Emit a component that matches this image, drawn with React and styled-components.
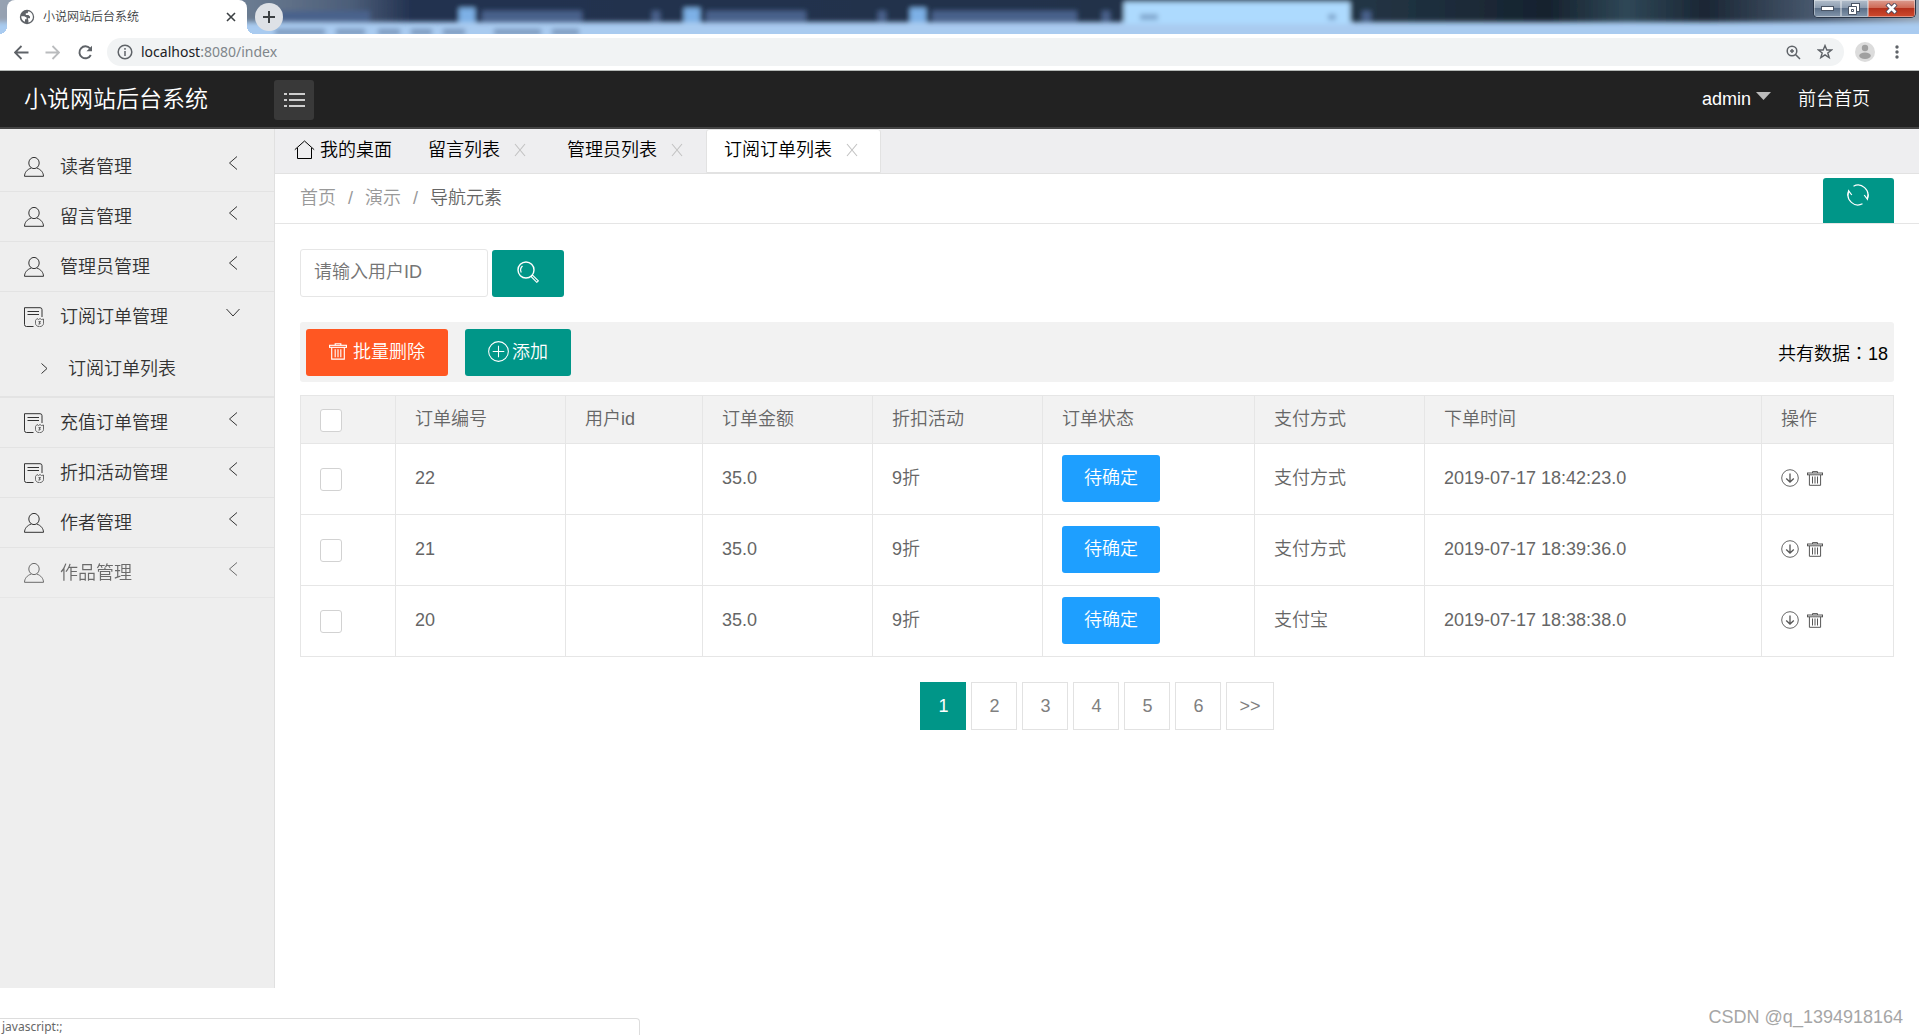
import React, { useState } from 'react';
import styled, { createGlobalStyle, css } from 'styled-components';

const GlobalStyle = createGlobalStyle`
  * {
    box-sizing: border-box;
  }

  body {
    margin: 0;
    background: #fff;
    color: #000;
    font: 350 18px/24px "Liberation Sans", "Noto Sans CJK SC", sans-serif;
  }

  button, input {
    font: inherit;
  }

  button {
    border: 0;
    padding: 0;
    background: none;
    color: inherit;
    cursor: pointer;
  }

  a {
    color: inherit;
    text-decoration: none;
  }

  ul, ol {
    list-style: none;
    margin: 0;
    padding: 0;
  }

  svg {
    display: block;
    flex: none;
  }
`;

const Page = styled.div`
  display: flex;
  flex-direction: column;
  min-height: 100vh;
`;

/* browser window */

const TitleBar = styled.div`
  position: relative;
  display: flex;
  align-items: flex-end;
  height: 34px;
  padding-left: 7px;
  overflow: hidden;
  background: #a9cbf0;
`;

const Glass = styled.svg`
  position: absolute;
  top: 0;
  left: 0;
  width: 100%;
  height: 100%;
`;

const BrowserTab = styled.div`
  position: relative;
  display: flex;
  align-items: center;
  width: 240px;
  height: 34px;
  padding: 0 9px 0 12px;
  border-radius: 8px 8px 0 0;
  background: #fff;
  color: #3c4043;
  font-size: 12px;

  &::before,
  &::after {
    content: '';
    position: absolute;
    bottom: 0;
    left: -8px;
    width: 8px;
    height: 8px;
    background: radial-gradient(circle at 0 0, transparent 8px, #fff 8px);
  }

  &::after {
    left: 100%;
    background: radial-gradient(circle at 100% 0, transparent 8px, #fff 8px);
  }

  span {
    flex: 1;
    margin-left: 8px;
  }
`;

const NewTab = styled.button`
  position: relative;
  display: flex;
  align-items: center;
  justify-content: center;
  width: 28px;
  height: 28px;
  margin: 0 auto 3px 8px;
  border-radius: 50%;
  background: #dee1e6;
  color: #3c4043;
`;

const WindowButtons = styled.div`
  position: relative;
  display: flex;
  align-self: flex-start;
  height: 18px;
  margin-right: 3px;
  border: 1px solid #2a3648;
  border-top: 0;
  border-radius: 0 0 5px 5px;
  overflow: hidden;
`;

const WindowButton = styled.button`
  display: flex;
  align-items: center;
  justify-content: center;
  width: ${({ $close }) => ($close ? 47 : 27)}px;
  box-shadow: inset 0 0 0 1px rgba(255, 255, 255, 0.4);
  background: ${({ $close }) => ($close
    ? 'linear-gradient(#dc9d8f 0, #cf6b56 45%, #b5321c 50%, #cf4a2e 100%)'
    : 'linear-gradient(#b3bfcc 0, #8c9cb0 45%, #5c7089 50%, #8497ac 100%)')};
`;

const AddressBar = styled.div`
  display: flex;
  align-items: center;
  height: 37px;
  padding-left: 12px;
  border-bottom: 1px solid #b4b8b6;
  color: #5f6368;
`;

const ChromeButton = styled.button`
  display: flex;
  align-items: center;
  justify-content: center;
  width: ${({ $width }) => $width || 32}px;
  height: 28px;
`;

const Omnibox = styled.div`
  display: flex;
  flex: 1;
  align-items: center;
  height: 28px;
  margin: 0 11px;
  padding: 0 3px 0 10px;
  border-radius: 14px;
  background: #f1f3f4;
`;

const UrlText = styled.span`
  flex: 1;
  margin-left: 8px;
  color: #80868b;
  font: 400 14px/20px "Noto Sans", sans-serif;

  b {
    color: #202124;
    font-weight: 400;
  }
`;

/* site header */

const Header = styled.header`
  display: flex;
  align-items: center;
  height: 58px;
  padding: 0 49px 0 24px;
  border-bottom: 2px solid #444;
  background: #222;
  color: #fff;
`;

const Logo = styled.a`
  width: 250px;
  font-size: 23px;
  line-height: 54px;
`;

const MenuButton = styled.button`
  display: flex;
  align-items: center;
  justify-content: center;
  width: 40px;
  height: 40px;
  margin: 2px auto 0 0;
  border-radius: 3px;
  background: #393939;
`;

const UserMenu = styled.button`
  display: flex;
  align-items: center;
  gap: 5px;
  margin-right: 27px;

  svg {
    margin-bottom: 6px;
  }
`;

/* sidebar */

const Body = styled.div`
  display: flex;
  flex: 1;
`;

const Sidebar = styled.nav`
  flex: none;
  width: 275px;
  padding-top: 13px;
  border-right: 1px solid #e0e0e0;
  background: #eee;
  color: #333;
`;

const NavItem = styled.li`
  border-bottom: ${({ $open }) => ($open ? 2 : 1)}px solid #e3e3e3;
  opacity: ${({ $faded }) => ($faded ? 0.7 : 1)};
`;

const NavLink = styled.a`
  display: flex;
  align-items: center;
  height: 49px;
  padding: 0 34px 0 24px;

  span {
    flex: 1;
    margin-left: 16px;
  }

  svg:last-child {
    margin-bottom: 8px;
  }
`;

const SubLink = styled.a`
  display: flex;
  align-items: center;
  gap: 19px;
  height: 55px;
  padding-left: 40px;
`;

/* content */

const Main = styled.main`
  flex: 1;
  min-width: 0;
`;

const Tabs = styled.div`
  display: flex;
  align-items: flex-start;
  height: 45px;
  padding-left: 1px;
  border-bottom: 1px solid #e2e2e2;
  background: #eeeef0;
`;

const Tab = styled.div`
  display: flex;
  align-items: center;
  height: 44px;
  padding: 0 18px 3px;

  ${({ $active }) => $active && css`
    padding: 0 17px 2px;
    border: 1px solid #e2e2e2;
    border-radius: 3px 3px 0 0;
    background: #fff;
  `}

  svg {
    margin-right: 5px;
  }
`;

const CloseButton = styled.button`
  display: flex;
  justify-content: center;
  width: 22px;
  margin-left: 9px;

  svg {
    margin: 0;
  }
`;

const Crumbs = styled.div`
  display: flex;
  align-items: flex-start;
  justify-content: space-between;
  height: 50px;
  padding: 0 25px;
  border-bottom: 1px solid #e5e5e5;

  ol {
    display: flex;
    color: #999;
    line-height: 48px;
  }

  li + li::before {
    content: '/';
    margin: 0 12px;
  }

  li:last-child a {
    color: #666;
  }
`;

const Button = styled.button`
  display: flex;
  align-items: center;
  justify-content: center;
  gap: ${({ $gap }) => $gap || 0}px;
  height: 47px;
  padding: 0 ${({ $pad }) => $pad || 22}px 1px;
  border-radius: 3px;
  background: ${({ $color }) => $color || '#009688'};
  color: #fff;
`;

const RefreshButton = styled(Button)`
  align-items: flex-start;
  width: 71px;
  height: 45px;
  margin-top: 4px;
  padding: 6px 2px 0 0;
  border-radius: 3px 3px 0 0;
`;

const Content = styled.div`
  padding: 25px;
`;

const SearchForm = styled.form`
  display: flex;
  align-items: flex-end;
  gap: 4px;
`;

const SearchInput = styled.input`
  width: 188px;
  height: 48px;
  padding: 0 13px 2px;
  border: 1px solid #e6e6e6;
  border-radius: 3px;
  background: #fff;

  &::placeholder {
    color: #757575;
    opacity: 1;
  }
`;

const SearchButton = styled(Button)`
  padding: 0 25px 3px;
`;

const Toolbar = styled.div`
  display: flex;
  align-items: center;
  gap: 17px;
  height: 60px;
  margin: 25px 0 13px;
  padding: 0 6px;
  border-radius: 3px;
  background: #f2f2f2;
`;

const Total = styled.span`
  margin: 3px 0 0 auto;
  font-family: "Liberation Sans", "Noto Sans CJK TC", sans-serif;
`;

const Table = styled.table`
  width: 100%;
  table-layout: fixed;
  border-collapse: collapse;
  color: #666;
  text-align: left;

  th,
  td {
    height: 71px;
    padding: 0 19px 2px;
    border: 1px solid #e6e6e6;
    font-weight: inherit;
  }

  th {
    height: 48px;
    background: #f2f2f2;
  }
`;

const Col = styled.col`
  width: ${({ $width }) => $width}px;
`;

const Checkbox = styled.input.attrs({ type: 'checkbox' })`
  display: block;
  appearance: none;
  width: 22px;
  height: 23px;
  margin: 3px 0 0;
  border: 1px solid #d2d2d2;
  border-radius: 3px;
  background: #fff;

  &:checked {
    background: #009688;
  }
`;

const Actions = styled.div`
  display: flex;
  align-items: center;
  gap: 8px;
  color: #555;
`;

const Pagination = styled.nav`
  display: flex;
  justify-content: center;
  gap: 5px;
  margin-top: 25px;
`;

const PageLink = styled.a`
  min-width: 46px;
  height: 48px;
  padding: 0 12px;
  border: 1px solid ${({ $active }) => ($active ? '#009688' : '#e2e2e2')};
  background: ${({ $active }) => ($active ? '#009688' : '#fff')};
  color: ${({ $active }) => ($active ? '#fff' : '#808080')};
  line-height: 46px;
  text-align: center;
`;

const Footer = styled.footer`
  display: flex;
  align-items: flex-end;
  justify-content: space-between;
  height: 47px;
  overflow: hidden;
`;

const StatusBubble = styled.div`
  width: calc(100% / 3);
  height: 17px;
  padding: 0 2px;
  border: 1px solid #ddd;
  border-width: 1px 1px 0 0;
  border-radius: 0 4px 0 0;
  color: #666;
  font: 400 12px/16px "Noto Sans", sans-serif;
`;

const Watermark = styled.span`
  padding: 0 16px 6px 0;
  color: #a6a6a6;
  font-weight: 400;
`;

/* icons */

const Icon = ({ size = 20, width = size, height = size, line = 1, box = '0 0 20 20', children }) => (
  <svg width={width} height={height} viewBox={box} fill="none" stroke="currentColor" strokeWidth={line} aria-hidden="true">
    {children}
  </svg>
);

const UserIcon = () => (
  <Icon>
    <ellipse cx="10" cy="6" rx="5.2" ry="5.6" />
    <path d="M7.2 11C3 12.5 0.6 15.5 0.5 19.3H19.5C19.4 15.5 17 12.5 12.8 11" />
  </Icon>
);

const OrderIcon = () => (
  <Icon>
    <path d="M9.5 19.5H2.5A2 2 0 0 1 0.5 17.5V0.7H16A2 2 0 0 1 18 2.7V10" />
    <path d="M3.5 4.5H15M3.5 7.5H15" />
    <path d="M11.5 13.5L13 11.5L14.5 12.5L16 11.5L17.5 12.5L19.5 12V16.5C19.5 18 18 19.5 15.5 19.8C13 19.5 11.5 18 11.5 16.5Z" opacity="0.7" />
    <path d="M14.5 14.5H16.5L14.8 16.2H16.5L14.5 17.8" opacity="0.7" />
  </Icon>
);

const ArrowLeft = () => <Icon size={14} box="0 0 14 14"><path d="M11 0.5L3.5 7L11 13.5" /></Icon>;
const ArrowDown = () => <Icon width={14} height={9} box="0 0 14 9"><path d="M0.5 1L7 8L13.5 1" /></Icon>;
const ArrowRight = () => <Icon width={9} height={11} box="0 0 9 11"><path d="M1.5 0.5L7 5.5L1.5 10.5" /></Icon>;
const Cross = () => <svg width="14" height="14" viewBox="0 0 14 14" stroke="#c2c2c2" strokeWidth="1.1" aria-hidden="true"><path d="M2 1L12 13M12 1L2 13" /></svg>;

const HomeIcon = () => (
  <Icon width={21}>
    <path d="M0.3 9.7L10 1L19.7 9.7M3 8V18.5H17V8" />
  </Icon>
);

const TrashIcon = ({ width = 16, height = 15 }) => (
  <Icon width={width} height={height} box="0 0 16 15">
    <path d="M5.5 2V0.6H10.5V2" />
    <rect x="0.5" y="2" width="15" height="1.8" />
    <path d="M2.4 4V14.3H13.6V4M5.5 5.5V12.5M8 5.5V12.5M10.5 5.5V12.5" />
  </Icon>
);

const AddIcon = () => (
  <Icon width={21} height={21}>
    <circle cx="10" cy="10" r="9.4" />
    <path d="M10 4.5V15.5M4.5 10H15.5" />
  </Icon>
);

const DownIcon = () => (
  <Icon size={18} box="0 0 18 18">
    <circle cx="9" cy="9" r="8.3" strokeWidth="0.9" />
    <path d="M9 4.5V13M5.2 9.5L9 13L12.8 9.5" strokeWidth="1.3" />
  </Icon>
);

const SearchIcon = () => (
  <Icon size={22} box="0 0 22 22" line={1.4}>
    <circle cx="9" cy="9" r="8" />
    <path d="M4.3 11.5A5.4 5.4 0 0 1 5.5 5" strokeWidth="1.2" />
    <path d="M14 15.5L15.5 14L21.3 19.8L19.8 21.3Z" strokeWidth="1.1" />
  </Icon>
);

const RefreshIcon = () => (
  <Icon size={22} box="0 0 22 22" line={1.2}>
    <path d="M6.5 2.2A10 10 0 0 1 20.4 14.5M1.6 7.5A10 10 0 0 0 15.5 19.8" />
    <path d="M17.2 11L20.4 15.2L21.3 10.4M0.7 11.6L1.6 6.8L4.8 11" />
  </Icon>
);

const MenuIcon = () => (
  <Icon width={21} height={14} box="0 0 21 14" line={1.4}>
    <path d="M0 1H3M0 7H3M0 13H3M5 1H21M5 7H21M5 13H21" />
  </Icon>
);

const GlassBackdrop = () => (
  <Glass viewBox="0 0 1919 34" preserveAspectRatio="none" aria-hidden="true">
    <defs>
      <linearGradient id="dark" x1="0" x2="1" y1="0" y2="0">
        <stop offset="0" stopColor="#9aa5b4" />
        <stop offset="0.13" stopColor="#6f7f94" />
        <stop offset="0.19" stopColor="#4b5d78" />
        <stop offset="0.22" stopColor="#233250" />
        <stop offset="0.58" stopColor="#22304a" />
        <stop offset="0.71" stopColor="#223444" />
        <stop offset="0.8" stopColor="#16222e" />
        <stop offset="0.84" stopColor="#2f4757" />
        <stop offset="0.88" stopColor="#1a2634" />
        <stop offset="0.94" stopColor="#4b5c72" />
        <stop offset="1" stopColor="#a9b7c6" />
      </linearGradient>
      <filter id="soft" x="-5%" y="-50%" width="110%" height="200%">
        <feGaussianBlur stdDeviation="2.5" />
      </filter>
    </defs>
    <g filter="url(#soft)">
      <rect x="-20" y="-10" width="1960" height="32" fill="url(#dark)" />
      <rect x="1124" y="2" width="226" height="22" fill="#addafe" />
      <g fill="#7db0e6">
        <rect x="459" y="8" width="16" height="14" />
        <rect x="684" y="8" width="16" height="14" />
        <rect x="910" y="8" width="16" height="14" />
      </g>
      <g fill="#4a628c">
        <rect x="275" y="11" width="95" height="10" />
        <rect x="482" y="11" width="100" height="10" />
        <rect x="706" y="11" width="100" height="10" />
        <rect x="932" y="11" width="145" height="10" />
        <rect x="878" y="11" width="8" height="10" />
        <rect x="1102" y="11" width="8" height="10" />
        <rect x="652" y="11" width="8" height="10" />
        <rect x="1362" y="11" width="9" height="10" />
      </g>
      <g fill="#7fa5cc">
        <rect x="1140" y="14" width="18" height="6" />
        <rect x="1328" y="14" width="8" height="6" />
      </g>
      <path d="M275 32H325M336 32H365M378 32H400M411 32H432M443 32H465M494 32H541M552 32H579" stroke="#7c99bd" strokeWidth="6" />
    </g>
  </Glass>
);

const menu = [
  { title: '读者管理', icon: UserIcon },
  { title: '留言管理', icon: UserIcon },
  { title: '管理员管理', icon: UserIcon },
  { title: '订阅订单管理', icon: OrderIcon, sub: '订阅订单列表' },
  { title: '充值订单管理', icon: OrderIcon },
  { title: '折扣活动管理', icon: OrderIcon },
  { title: '作者管理', icon: UserIcon },
  { title: '作品管理', icon: UserIcon, faded: true },
];

const tabs = ['留言列表', '管理员列表', '订阅订单列表'];

const columns = [
  ['订单编号', 170],
  ['用户id', 137],
  ['订单金额', 170],
  ['折扣活动', 170],
  ['订单状态', 212],
  ['支付方式', 170],
  ['下单时间', 337],
  ['操作', 132],
];

const orders = [
  { id: 22, price: '35.0', discount: '9折', status: '待确定', pay: '支付方式', time: '2019-07-17 18:42:23.0' },
  { id: 21, price: '35.0', discount: '9折', status: '待确定', pay: '支付方式', time: '2019-07-17 18:39:36.0' },
  { id: 20, price: '35.0', discount: '9折', status: '待确定', pay: '支付宝', time: '2019-07-17 18:38:38.0' },
];

const Browser = () => (
  <>
    <TitleBar>
      <GlassBackdrop />
      <BrowserTab>
        <svg width="16" height="16" viewBox="0 0 16 16" aria-hidden="true">
          <circle cx="8" cy="8" r="7.2" fill="#5f6368" />
          <path d="M2.2 7.2H5.2L7.6 8.6V10.2H6V12.8C3.8 12 2.2 10 2.2 7.2ZM9.4 2.2L8.6 4.2H6.8V6H9.4L11 7.6V9.2H8.8L9.4 11.4V13.4C12.4 12.8 13.9 10.4 13.9 8C13.9 5 12 2.8 9.4 2.2Z" fill="#fff" />
        </svg>
        <span>小说网站后台系统</span>
        <ChromeButton aria-label="关闭" $width={14}>
          <Icon size={10} box="0 0 10 10" line={1.6}><path d="M1 1L9 9M9 1L1 9" /></Icon>
        </ChromeButton>
      </BrowserTab>
      <NewTab aria-label="新标签页">
        <Icon size={12} box="0 0 12 12" line={2}><path d="M6 0V12M0 6H12" /></Icon>
      </NewTab>
      <WindowButtons>
        <WindowButton aria-label="最小化">
          <svg width="13" height="6" aria-hidden="true"><rect x="0.5" y="0.5" width="12" height="4" fill="#fff" stroke="#4a5565" /></svg>
        </WindowButton>
        <WindowButton aria-label="还原">
          <svg width="13" height="12" fill="#fff" stroke="#4a5565" aria-hidden="true">
            <rect x="3.5" y="0.5" width="8" height="8" />
            <path d="M0.5 3.5H8.5V11.5H0.5ZM3.5 6.5V8.5H5.5V6.5Z" fillRule="evenodd" />
          </svg>
        </WindowButton>
        <WindowButton $close aria-label="关闭窗口">
          <svg width="13" height="11" aria-hidden="true">
            <path d="M2 1L11 10M11 1L2 10" stroke="#50485a" strokeWidth="4.5" />
            <path d="M2.5 1.5L10.5 9.5M10.5 1.5L2.5 9.5" stroke="#fff" strokeWidth="2.6" />
          </svg>
        </WindowButton>
      </WindowButtons>
    </TitleBar>
    <AddressBar>
      <ChromeButton aria-label="后退" $width={18}>
        <Icon size={15} box="0 0 15 15" line={1.8}><path d="M14.5 7.5H1.5M7.5 1L1 7.5L7.5 14" /></Icon>
      </ChromeButton>
      <ChromeButton aria-label="前进" $width={44}>
        <svg width="15" height="15" viewBox="0 0 15 15" fill="none" stroke="#babcbe" strokeWidth="1.8" aria-hidden="true"><path d="M0.5 7.5H13.5M7.5 1L14 7.5L7.5 14" /></svg>
      </ChromeButton>
      <ChromeButton aria-label="刷新页面" $width={22}>
        <Icon size={15} box="0 0 15 15" line={1.9}>
          <path d="M12.8 10A6 6 0 1 1 12 3.4" />
          <path d="M14 0.8V6.3H8.5Z" fill="currentColor" stroke="none" />
        </Icon>
      </ChromeButton>
      <Omnibox>
        <Icon size={16} box="0 0 16 16" line={1.5}><circle cx="8" cy="8" r="6.8" /><path d="M8 7V12M8 4V5.7" /></Icon>
        <UrlText><b>localhost</b>:8080/index</UrlText>
        <ChromeButton aria-label="缩放">
          <Icon size={15} box="0 0 15 15" line={1.5}><circle cx="6" cy="6" r="4.8" /><path d="M9.5 9.5L14 14M6 4V8M4 6H8" /></Icon>
        </ChromeButton>
        <ChromeButton aria-label="收藏">
          <Icon size={16} box="0 0 16 16" line={1.4}><path d="M8 1.6L9.8 6H14.6L10.8 8.9L12.2 13.6L8 10.8L3.8 13.6L5.2 8.9L1.4 6H6.2Z" /></Icon>
        </ChromeButton>
      </Omnibox>
      <ChromeButton aria-label="用户" $width={20}>
        <svg width="20" height="20" aria-hidden="true">
          <circle cx="10" cy="10" r="10" fill="#dcdcdc" />
          <circle cx="10" cy="6" r="3.2" fill="#a0a0a0" />
          <ellipse cx="10" cy="13.8" rx="5.8" ry="3.2" fill="#a0a0a0" />
        </svg>
      </ChromeButton>
      <ChromeButton aria-label="菜单" $width={44}>
        <svg width="4" height="14" fill="#5f6368" aria-hidden="true"><circle cx="2" cy="2" r="1.7" /><circle cx="2" cy="7" r="1.7" /><circle cx="2" cy="12" r="1.7" /></svg>
      </ChromeButton>
    </AddressBar>
  </>
);

const OrdersTable = () => (
  <Table>
    <colgroup>
      <Col $width={95} />
      {columns.map(([title, width]) => <Col key={title} $width={width} />)}
    </colgroup>
    <thead>
      <tr>
        <th><Checkbox aria-label="全选" /></th>
        {columns.map(([title]) => <th key={title}>{title}</th>)}
      </tr>
    </thead>
    <tbody>
      {orders.map((order) => (
        <tr key={order.id}>
          <td><Checkbox aria-label={`选择订单 ${order.id}`} /></td>
          <td>{order.id}</td>
          <td />
          <td>{order.price}</td>
          <td>{order.discount}</td>
          <td><Button $color="#1e9fff">{order.status}</Button></td>
          <td>{order.pay}</td>
          <td>{order.time}</td>
          <td>
            <Actions>
              <button type="button" aria-label="下载"><DownIcon /></button>
              <button type="button" aria-label="删除"><TrashIcon /></button>
            </Actions>
          </td>
        </tr>
      ))}
    </tbody>
  </Table>
);

const App = () => {
  const [userId, setUserId] = useState('');

  return (
    <Page>
      <GlobalStyle />
      <Browser />
      <Header>
        <Logo href="#">小说网站后台系统</Logo>
        <MenuButton aria-label="折叠菜单"><MenuIcon /></MenuButton>
        <UserMenu>
          admin
          <svg width="15" height="8" aria-hidden="true"><path d="M0 0H15L7.5 8Z" fill="#bbb" /></svg>
        </UserMenu>
        <a href="#">前台首页</a>
      </Header>
      <Body>
        <Sidebar>
          <ul>
            {menu.map(({ title, icon: ItemIcon, sub, faded }) => (
              <NavItem key={title} $open={!!sub} $faded={faded}>
                <NavLink href="#">
                  <ItemIcon />
                  <span>{title}</span>
                  {sub ? <ArrowDown /> : <ArrowLeft />}
                </NavLink>
                {sub && <SubLink href="#"><ArrowRight />{sub}</SubLink>}
              </NavItem>
            ))}
          </ul>
        </Sidebar>
        <Main>
          <Tabs>
            <Tab><HomeIcon />我的桌面</Tab>
            {tabs.map((title, i) => (
              <Tab key={title} $active={i === tabs.length - 1}>
                {title}
                <CloseButton aria-label={`关闭${title}`}><Cross /></CloseButton>
              </Tab>
            ))}
          </Tabs>
          <Crumbs>
            <ol>
              <li><a href="#">首页</a></li>
              <li><a href="#">演示</a></li>
              <li><a href="#">导航元素</a></li>
            </ol>
            <RefreshButton aria-label="刷新"><RefreshIcon /></RefreshButton>
          </Crumbs>
          <Content>
            <SearchForm onSubmit={(e) => e.preventDefault()}>
              <SearchInput
                aria-label="用户ID"
                placeholder="请输入用户ID"
                value={userId}
                onChange={(e) => setUserId(e.target.value)}
              />
              <SearchButton aria-label="搜索"><SearchIcon /></SearchButton>
            </SearchForm>
            <Toolbar>
              <Button $color="#ff5722" $pad={23} $gap={6}><TrashIcon width={18} height={17} />批量删除</Button>
              <Button $pad={23} $gap={3}><AddIcon />添加</Button>
              <Total>共有数据：18</Total>
            </Toolbar>
            <OrdersTable />
            <Pagination aria-label="分页">
              {['1', '2', '3', '4', '5', '6', '>>'].map((page) => (
                <PageLink key={page} href="#" $active={page === '1'}>{page}</PageLink>
              ))}
            </Pagination>
          </Content>
        </Main>
      </Body>
      <Footer>
        <StatusBubble>javascript:;</StatusBubble>
        <Watermark>CSDN @q_1394918164</Watermark>
      </Footer>
    </Page>
  );
};

export default App;
